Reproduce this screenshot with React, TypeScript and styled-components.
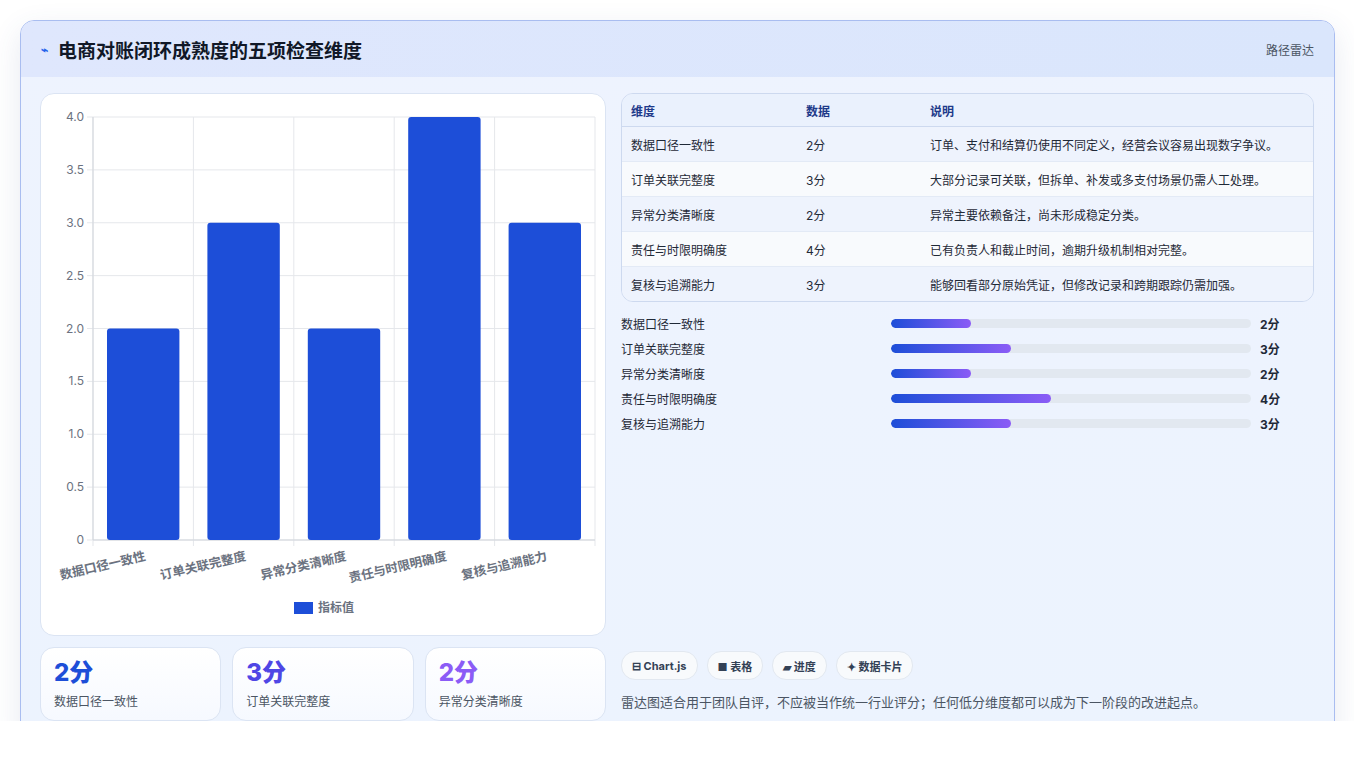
import styled, { createGlobalStyle } from 'styled-components';

const Global = createGlobalStyle`
  body { margin: 0; background: #fff; font-family: Inter, "Noto Sans CJK SC", sans-serif; }
`;

const rows = [
  { name: '数据口径一致性', score: 2, note: '订单、支付和结算仍使用不同定义，经营会议容易出现数字争议。' },
  { name: '订单关联完整度', score: 3, note: '大部分记录可关联，但拆单、补发或多支付场景仍需人工处理。' },
  { name: '异常分类清晰度', score: 2, note: '异常主要依赖备注，尚未形成稳定分类。' },
  { name: '责任与时限明确度', score: 4, note: '已有负责人和截止时间，逾期升级机制相对完整。' },
  { name: '复核与追溯能力', score: 3, note: '能够回看部分原始凭证，但修改记录和跨期跟踪仍需加强。' },
];

const Page = styled.div`
  padding: 20px 20px 20px 20px;
  height: 721px;
  box-sizing: border-box;
`;

const Panel = styled.div`
  width: 1313px;
  height: 720px;
  border: 1px solid #a9bdf0;
  border-radius: 14px;
  overflow: hidden;
  background: linear-gradient(180deg, #eef3fe, #ecf3fe);
  box-shadow: 0 10px 30px rgba(60, 80, 140, 0.12);
  display: flex;
  flex-direction: column;
`;

const Header = styled.div`
  height: 56px;
  flex: none;
  background: linear-gradient(90deg, #dfe7fd, #dae6fc);
  display: flex;
  align-items: center;
  justify-content: space-between;
  padding: 0 20px;
`;

const Title = styled.h1`
  margin: 0;
  font-size: 19px;
  font-weight: 700;
  color: #111827;
  display: flex;
  align-items: center;
  gap: 10px;
`;

const Tag = styled.span`
  font-size: 12px;
  color: #4b5563;
`;

const Body = styled.div`
  flex: 1;
  display: grid;
  grid-template-columns: 566px 693px;
  gap: 15px;
  padding: 16px 19px 18px 19px;
`;

const LeftCol = styled.div`
  display: flex;
  flex-direction: column;
  gap: 11px;
`;

const ChartCard = styled.div`
  height: 543px;
  background: #fff;
  border: 1px solid #dbe4f3;
  border-radius: 14px;
  box-sizing: border-box;
`;

const Stats = styled.div`
  display: grid;
  grid-template-columns: repeat(3, 1fr);
  gap: 11px;
`;

const Stat = styled.div`
  height: 74px;
  box-sizing: border-box;
  border: 1px solid #dbe4f3;
  border-radius: 14px;
  background: linear-gradient(180deg, #fff, #f6f9ff);
  padding: 10px 13px;
`;

const StatValue = styled.div<{ $c: string }>`
  font-size: 24px;
  font-weight: 800;
  color: ${p => p.$c};
  line-height: 30px;
`;

const StatLabel = styled.div`
  font-size: 12px;
  color: #4b5563;
  margin-top: 4px;
`;

const RightCol = styled.div`
  display: flex;
  flex-direction: column;
`;

const Table = styled.table`
  width: 100%;
  border-collapse: separate;
  border-spacing: 0;
  border: 1px solid #cdd9ef;
  border-radius: 12px;
  overflow: hidden;
  font-size: 12px;
  color: #1f2937;
  th {
    text-align: left;
    font-weight: 700;
    color: #1e3a8a;
    background: #eaf1fd;
    height: 32px;
    padding: 0 9px;
    border-bottom: 1px solid #cdd9ef;
  }
  td {
    height: 34px;
    padding: 0 9px;
    border-bottom: 1px solid #e3eaf6;
  }
  tr:last-child td { border-bottom: none; }
  tbody tr:nth-child(odd) td { background: #eef3fd; }
  tbody tr:nth-child(even) td { background: #f8fafd; }
`;

const Bars = styled.div`
  margin-top: 12px;
  display: flex;
  flex-direction: column;
  gap: 7px;
`;

const BarRow = styled.div`
  display: grid;
  grid-template-columns: 261px 360px auto;
  align-items: center;
  gap: 9px;
  height: 18px;
  font-size: 12px;
  color: #1f2937;
`;

const Track = styled.div`
  height: 9px;
  border-radius: 5px;
  background: #e2e8f0;
  overflow: hidden;
`;

const Fill = styled.div`
  height: 100%;
  border-radius: 5px;
  background: linear-gradient(90deg, #1d4ed8, #8b5cf6);
`;

const Val = styled.span`
  font-weight: 700;
`;

const Footer = styled.div`
  margin-top: auto;
  display: flex;
  flex-direction: column;
  gap: 12px;
`;

const Chips = styled.div`
  display: flex;
  gap: 9px;
`;

const Chip = styled.span`
  height: 27px;
  padding: 0 10px;
  border-radius: 14px;
  border: 1px solid #e2e8f0;
  background: #f8fafc;
  font-size: 11px;
  font-weight: 700;
  color: #334155;
  display: inline-flex;
  align-items: center;
  gap: 4px;
`;

const Note = styled.div`
  font-size: 13px;
  color: #4b5563;
  margin-bottom: 12px;
`;

const Chart = () => {
  const L = 52, R = 554, T = 23, B = 446;
  const w = (R - L) / 5;
  const y = (v: number) => B - (v / 4) * (B - T);
  const ticks = [0, 0.5, 1, 1.5, 2, 2.5, 3, 3.5, 4];
  return (
    <svg width="566" height="541" style={{ display: 'block' }} fontFamily="Inter, 'Noto Sans CJK SC', sans-serif">
      {ticks.map(t => (
        <g key={t}>
          <line x1={L - 6} x2={R} y1={y(t)} y2={y(t)} stroke="#e5e7eb" />
          <text x={L - 9} y={y(t) + 4} fontSize="12" fill="#6b7280" textAnchor="end">{t === 0 ? '0' : t.toFixed(1)}</text>
        </g>
      ))}
      {[0, 1, 2, 3, 4, 5].map(i => (
        <line key={i} x1={L + i * w} x2={L + i * w} y1={T} y2={B + 6} stroke="#e5e7eb" />
      ))}
      <line x1={L} x2={L} y1={T} y2={B} stroke="#d1d5db" />
      <line x1={L} x2={R} y1={B} y2={B} stroke="#d1d5db" />
      {rows.map((r, i) => (
        <g key={r.name}>
          <rect x={L + i * w + 14} y={y(r.score)} width={w - 28} height={B - y(r.score)} rx="3" fill="#1d4ed8" />
          <text
            transform={`translate(${L + i * w + w / 2 + 3} ${B + 20}) rotate(-13)`}
            fontSize="12.5"
            fontWeight="700"
            fill="#6b7280"
            textAnchor="end"
          >{r.name}</text>
        </g>
      ))}
      <rect x="253" y="508" width="19" height="12" fill="#1d4ed8" />
      <text x="277" y="518" fontSize="12" fill="#6b7280" fontWeight="600">指标值</text>
    </svg>
  );
};

export default function App() {
  const colors = ['#1d4ed8', '#4f46e5', '#8b5cf6'];
  return (
    <Page>
      <Global />
      <Panel>
        <Header>
          <Title><span style={{ color: '#2563eb', fontSize: 12 }}>⌁</span>电商对账闭环成熟度的五项检查维度</Title>
          <Tag>路径雷达</Tag>
        </Header>
        <Body>
          <LeftCol>
            <ChartCard><Chart /></ChartCard>
            <Stats>
              {rows.slice(0, 3).map((r, i) => (
                <Stat key={r.name}>
                  <StatValue $c={colors[i]}>{r.score}分</StatValue>
                  <StatLabel>{r.name}</StatLabel>
                </Stat>
              ))}
            </Stats>
          </LeftCol>
          <RightCol>
            <Table>
              <thead>
                <tr><th style={{ width: 157 }}>维度</th><th style={{ width: 106 }}>数据</th><th>说明</th></tr>
              </thead>
              <tbody>
                {rows.map(r => (
                  <tr key={r.name}><td>{r.name}</td><td>{r.score}分</td><td>{r.note}</td></tr>
                ))}
              </tbody>
            </Table>
            <Bars>
              {rows.map(r => (
                <BarRow key={r.name}>
                  <span>{r.name}</span>
                  <Track><Fill style={{ width: `${(r.score / 9) * 100}%` }} /></Track>
                  <Val>{r.score}分</Val>
                </BarRow>
              ))}
            </Bars>
            <Footer>
              <Chips>
                <Chip>⊟ Chart.js</Chip>
                <Chip>■ 表格</Chip>
                <Chip>▰ 进度</Chip>
                <Chip>✦ 数据卡片</Chip>
              </Chips>
              <Note>雷达图适合用于团队自评，不应被当作统一行业评分；任何低分维度都可以成为下一阶段的改进起点。</Note>
            </Footer>
          </RightCol>
        </Body>
      </Panel>
    </Page>
  );
}
